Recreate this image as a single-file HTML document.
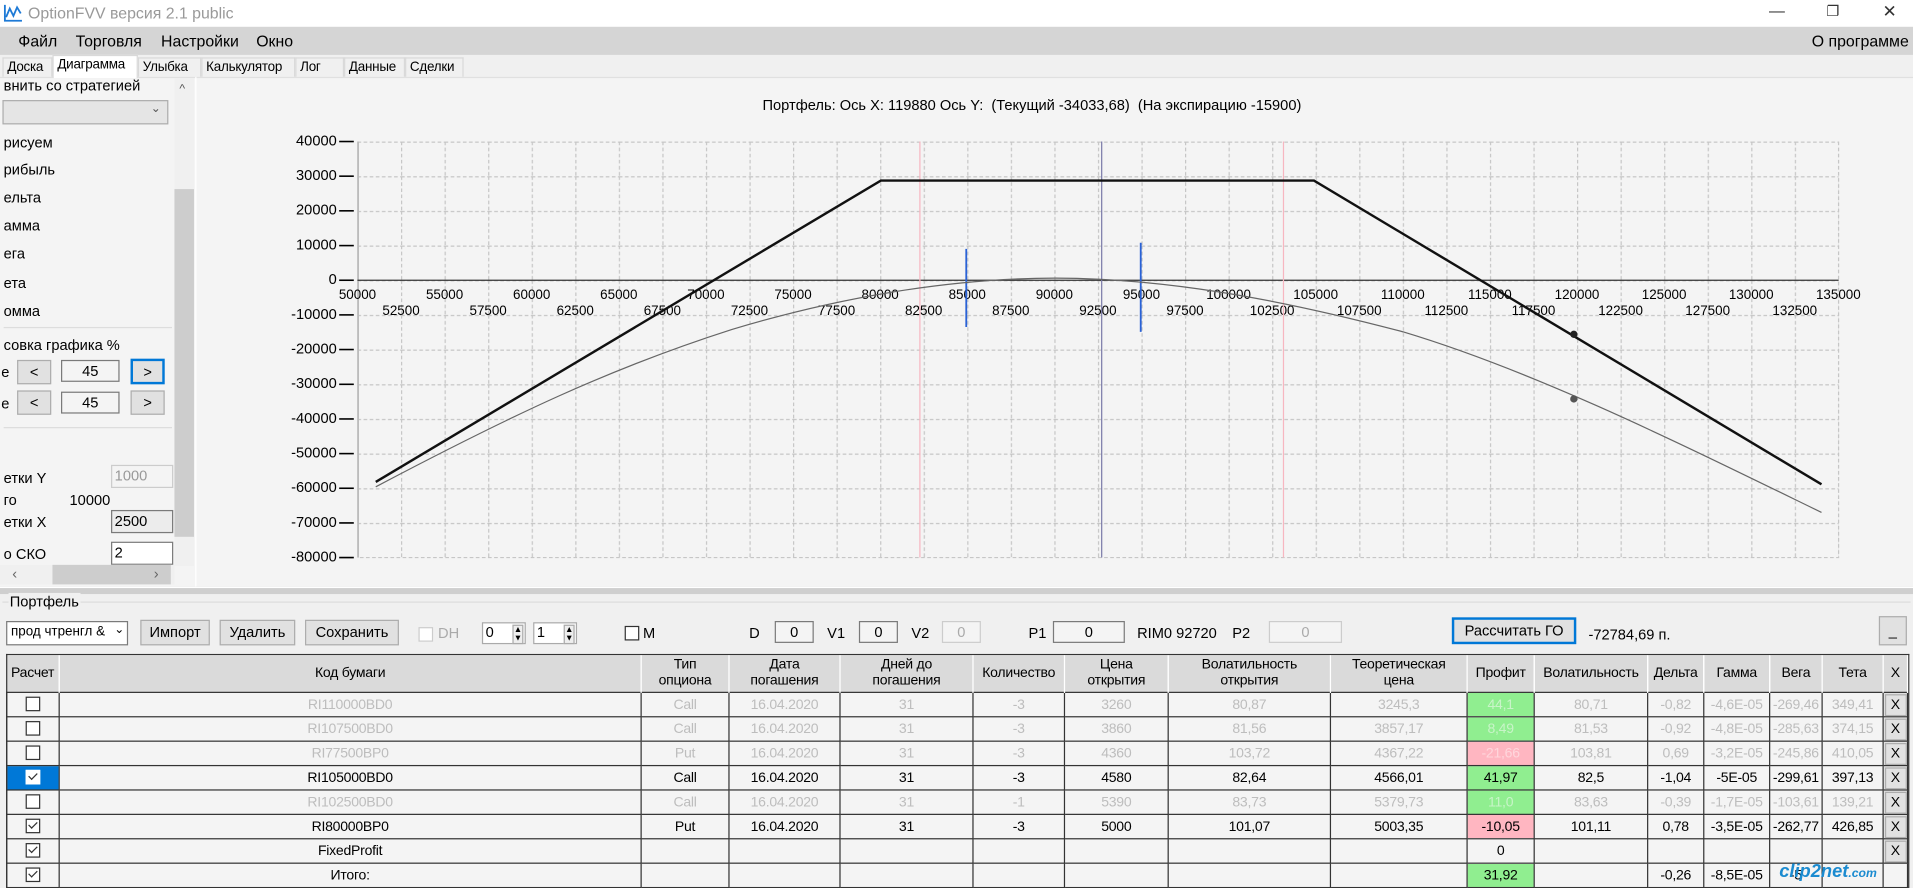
<!DOCTYPE html>
<html><head><meta charset="utf-8">
<style>
html,body{margin:0;padding:0;width:1913px;height:888px;overflow:hidden;background:#f0f0f0;}
#w{position:absolute;left:0;top:0;width:1568px;height:728px;transform:scale(1.22003);transform-origin:0 0;font-family:"Liberation Sans",Arial,sans-serif;font-size:12px;color:#000;background:#f0f0f0;}
.a{position:absolute;white-space:nowrap;}
.btn{position:absolute;background:#e1e1e1;border:1px solid #adadad;box-sizing:border-box;text-align:center;font-size:12px;}
.box{position:absolute;background:#f4f4f4;border:1px solid #7a7a7a;box-sizing:border-box;text-align:center;font-size:12px;}
.tab{position:absolute;top:47px;height:16px;border:1px solid #d9d9d9;border-bottom:none;box-sizing:border-box;padding:1px 3px 0;font-size:11px;background:#f0f0f0;letter-spacing:-0.2px;}
table{border-collapse:collapse;table-layout:fixed;}
td,th{padding:0;text-align:center;overflow:hidden;white-space:nowrap;font-size:11.5px;letter-spacing:-0.2px;}
th{background:#dadada;font-weight:normal;height:30px;border-right:1px solid #fff;line-height:13px;}
td{height:19px;border:1px solid #333;background:#f4f4f4;}
tr.d td{color:#bdbdbd;}
td.g{background:#90ee90;color:#000;}
tr.d td.g{color:#c8f4c8;}
td.p{background:#ffb6c1;}
tr.d td.p{color:#ffd6dc;}
.cb{display:inline-block;width:10px;height:10px;border:1px solid #333;background:#fff;vertical-align:middle;position:relative;}
.cb.k::after{content:"";position:absolute;left:3px;top:0px;width:3px;height:6px;border:solid #333;border-width:0 1.5px 1.5px 0;transform:rotate(45deg);}
td.x{background:#e1e1e1;border:1px solid #333;}
td.x span{display:inline-block;width:16px;border:1px solid #adadad;background:#e1e1e1;line-height:16px;color:#000;}
</style></head><body><div id="w">
<div class="a" style="left:0;top:0;width:1568px;height:22px;background:#fff;"></div>
<svg class="a" style="left:3px;top:3px" width="16" height="15" viewBox="0 0 16 15"><path d="M1 1V14H15" stroke="#1e7ad6" stroke-width="1.5" fill="none"/><path d="M2 11L5 4L8 10L11 3L14 8" stroke="#1e7ad6" stroke-width="1.5" fill="none"/></svg>
<div class="a" style="left:23px;top:3px;font-size:13px;color:#999;">OptionFVV версия 2.1 public</div>
<div class="a" style="left:1450px;top:1px;font-size:13px;color:#333;">—</div>
<div class="a" style="left:1497px;top:2px;font-size:12px;color:#333;">❐</div>
<div class="a" style="left:1543px;top:1px;font-size:14px;color:#333;">✕</div>
<div class="a" style="left:0;top:22px;width:1568px;height:23px;background:#d5d5d5;"></div>
<div class="a" style="left:15px;top:26px;font-size:13px;">Файл</div>
<div class="a" style="left:62px;top:26px;font-size:13px;">Торговля</div>
<div class="a" style="left:132px;top:26px;font-size:13px;">Настройки</div>
<div class="a" style="left:210px;top:26px;font-size:13px;">Окно</div>
<div class="a" style="left:1485px;top:26px;font-size:13px;">О программе</div>
<div class="tab" style="left:2px;width:41px;">Доска</div>
<div class="tab" style="left:43px;top:45px;height:19px;width:70px;background:#fff;z-index:2;">Диаграмма</div>
<div class="tab" style="left:113px;width:52px;">Улыбка</div>
<div class="tab" style="left:165px;width:77px;">Калькулятор</div>
<div class="tab" style="left:242px;width:40px;">Лог</div>
<div class="tab" style="left:282px;width:50px;">Данные</div>
<div class="tab" style="left:332px;width:48px;">Сделки</div>
<div class="a" style="left:0;top:63px;width:1568px;height:418px;background:#f4f4f4;border-top:1px solid #e0e0e0;"></div>
<div class="a" style="left:3px;top:63px;">внить со стратегией</div>
<div class="a" style="left:2px;top:82px;width:136px;height:20px;background:#e5e5e5;border:1px solid #adadad;box-sizing:border-box;"><span style="position:absolute;right:5px;top:1px;font-size:10px;color:#555;">&#8964;</span></div>
<div class="a" style="left:3px;top:110px;">рисуем</div>
<div class="a" style="left:3px;top:132px;">рибыль</div>
<div class="a" style="left:3px;top:155px;">ельта</div>
<div class="a" style="left:3px;top:178px;">амма</div>
<div class="a" style="left:3px;top:201px;">ега</div>
<div class="a" style="left:3px;top:225px;">ета</div>
<div class="a" style="left:3px;top:248px;">омма</div>
<div class="a" style="left:3px;top:268px;width:138px;border-top:1px solid #ddd;"></div>
<div class="a" style="left:3px;top:276px;">совка графика %</div>
<div class="a" style="left:1px;top:298px;">е</div>
<div class="btn" style="left:14px;top:295px;width:28px;height:20px;line-height:18px;">&lt;</div>
<div class="box" style="left:50px;top:295px;width:48px;height:18px;line-height:16px;">45</div>
<div class="btn" style="left:107px;top:294px;width:28px;height:21px;line-height:18px;border:2px solid #0078d7;">&gt;</div>
<div class="a" style="left:1px;top:324px;">е</div>
<div class="btn" style="left:14px;top:320px;width:28px;height:20px;line-height:18px;">&lt;</div>
<div class="box" style="left:50px;top:321px;width:48px;height:18px;line-height:16px;">45</div>
<div class="btn" style="left:107px;top:320px;width:28px;height:20px;line-height:18px;">&gt;</div>
<div class="a" style="left:3px;top:350px;width:138px;border-top:1px solid #ddd;"></div>
<div class="a" style="left:3px;top:385px;">етки Y</div>
<div class="box" style="left:91px;top:381px;width:51px;height:19px;line-height:17px;text-align:left;padding-left:2px;color:#999;border-color:#ccc;">1000</div>
<div class="a" style="left:3px;top:403px;">го</div>
<div class="a" style="left:57px;top:403px;">10000</div>
<div class="a" style="left:3px;top:421px;">етки X</div>
<div class="box" style="left:91px;top:418px;width:51px;height:19px;line-height:17px;text-align:left;padding-left:2px;background:#ececec;">2500</div>
<div class="a" style="left:3px;top:447px;">о СКО</div>
<div class="box" style="left:91px;top:444px;width:51px;height:19px;line-height:17px;text-align:left;padding-left:2px;background:#fff;">2</div>
<div class="a" style="left:146px;top:446px;font-size:9px;color:#666;">v</div>
<div class="a" style="left:143px;top:64px;width:16px;height:400px;background:#f0f0f0;"></div>
<div class="a" style="left:147px;top:68px;font-size:10px;color:#555;">^</div>
<div class="a" style="left:143px;top:155px;width:16px;height:285px;background:#cdcdcd;"></div>
<div class="a" style="left:0;top:463px;width:143px;height:16px;background:#f0f0f0;"></div>
<div class="a" style="left:10px;top:463px;color:#666;">&lsaquo;</div>
<div class="a" style="left:43px;top:463px;width:97px;height:16px;background:#cdcdcd;"></div>
<div class="a" style="left:126px;top:463px;color:#666;">&rsaquo;</div>
<div class="a" style="left:160px;top:63px;width:1px;height:418px;background:#fff;"></div>
<div class="a" style="left:625px;top:79px;font-size:12px;">Портфель: Ось X: 119880 Ось Y:&nbsp; (Текущий -34033,68)&nbsp; (На экспирацию -15900)</div>
<svg class="a" style="left:160px;top:63px" width="1408" height="418" viewBox="160 63 1408 418" font-family="Liberation Sans, Arial, sans-serif" font-size="12">
<defs><pattern id="gp" x="293" y="116" width="35.7" height="28.417" patternUnits="userSpaceOnUse"><path d="M0.5 0V28.417M0 0.5H35.7" stroke="#c6c6c6" stroke-width="1" stroke-dasharray="3 2" fill="none"/></pattern></defs>
<rect x="293" y="116" width="1214" height="341" fill="url(#gp)"/>
<path d="M1507 116V457H293" stroke="#c6c6c6" stroke-dasharray="3 2" fill="none"/>
<line x1="293.5" y1="116" x2="293.5" y2="457" stroke="#bbb" stroke-width="1.5"/>
<line x1="293" y1="229.7" x2="1507" y2="229.7" stroke="#333" stroke-width="1"/>
<g stroke="#000" stroke-width="1.3">
<line x1="278" y1="116" x2="290" y2="116"/><line x1="278" y1="144.4" x2="290" y2="144.4"/><line x1="278" y1="172.8" x2="290" y2="172.8"/><line x1="278" y1="201.3" x2="290" y2="201.3"/><line x1="278" y1="229.7" x2="290" y2="229.7"/><line x1="278" y1="258.1" x2="290" y2="258.1"/><line x1="278" y1="286.5" x2="290" y2="286.5"/><line x1="278" y1="315" x2="290" y2="315"/><line x1="278" y1="343.4" x2="290" y2="343.4"/><line x1="278" y1="371.8" x2="290" y2="371.8"/><line x1="278" y1="400.2" x2="290" y2="400.2"/><line x1="278" y1="428.6" x2="290" y2="428.6"/><line x1="278" y1="457" x2="290" y2="457"/>
</g>
<g text-anchor="end" dominant-baseline="middle">
<text x="276" y="116">40000</text><text x="276" y="144.4">30000</text><text x="276" y="172.8">20000</text><text x="276" y="201.3">10000</text><text x="276" y="229.7">0</text><text x="276" y="258.1">-10000</text><text x="276" y="286.5">-20000</text><text x="276" y="315">-30000</text><text x="276" y="343.4">-40000</text><text x="276" y="371.8">-50000</text><text x="276" y="400.2">-60000</text><text x="276" y="428.6">-70000</text><text x="276" y="457">-80000</text>
</g>
<g text-anchor="middle" font-size="11">
<text x="293" y="245">50000</text><text x="364.4" y="245">55000</text><text x="435.8" y="245">60000</text><text x="507.2" y="245">65000</text><text x="578.6" y="245">70000</text><text x="650" y="245">75000</text><text x="721.4" y="245">80000</text><text x="792.8" y="245">85000</text><text x="864.2" y="245">90000</text><text x="935.6" y="245">95000</text><text x="1007" y="245">100000</text><text x="1078.4" y="245">105000</text><text x="1149.8" y="245">110000</text><text x="1221.2" y="245">115000</text><text x="1292.6" y="245">120000</text><text x="1364" y="245">125000</text><text x="1435.4" y="245">130000</text><text x="1506.8" y="245">135000</text>
<text x="328.7" y="258">52500</text><text x="400.1" y="258">57500</text><text x="471.5" y="258">62500</text><text x="542.9" y="258">67500</text><text x="614.3" y="258">72500</text><text x="685.7" y="258">77500</text><text x="757.1" y="258">82500</text><text x="828.5" y="258">87500</text><text x="899.9" y="258">92500</text><text x="971.3" y="258">97500</text><text x="1042.7" y="258">102500</text><text x="1114.1" y="258">107500</text><text x="1185.5" y="258">112500</text><text x="1256.9" y="258">117500</text><text x="1328.3" y="258">122500</text><text x="1399.7" y="258">127500</text><text x="1471.1" y="258">132500</text>
</g>
<line x1="754" y1="116" x2="754" y2="457" stroke="#f7b6c0" stroke-width="1"/>
<line x1="1052" y1="116" x2="1052" y2="457" stroke="#f7b6c0" stroke-width="1"/>
<line x1="903" y1="116" x2="903" y2="457" stroke="#7a7aa8" stroke-width="1"/>
<line x1="792" y1="204" x2="792" y2="268" stroke="#2a62d6" stroke-width="1.5"/>
<line x1="935" y1="199" x2="935" y2="272" stroke="#2a62d6" stroke-width="1.5"/>
<path d="M308 399C420 340 500 302 600 270C700 240 790 228 865 228C950 228 1040 243 1150 272C1260 305 1380 365 1493 420" stroke="#666" stroke-width="1" fill="none"/>
<polyline points="308,395 722,148 1077,148 1493,397" stroke="#111" stroke-width="2" fill="none"/>
<circle cx="1290" cy="274" r="3" fill="#222"/>
<circle cx="1290" cy="327" r="3" fill="#555"/>
</svg>
<div class="a" style="left:0;top:481px;width:1568px;height:5px;background:#cfcfcf;border-top:1px solid #fff;"></div>
<div class="a" style="left:0;top:487px;width:1568px;height:241px;background:#f0f0f0;"></div>
<div class="a" style="left:2px;top:493px;width:1564px;border-top:1px solid #dcdcdc;"></div>
<div class="a" style="left:7px;top:486px;background:#f0f0f0;padding:0 1px;">Портфель</div>
<div class="a" style="left:5px;top:509px;width:100px;height:20px;background:#fff;border:1px solid #7a7a7a;box-sizing:border-box;padding:2px 3px;font-size:11px;overflow:hidden;">прод чтренгл &amp;<span style="position:absolute;right:2px;top:1px;background:#fff;font-size:10px;">&#8964;</span></div>
<div class="btn" style="left:115px;top:508px;width:57px;height:21px;line-height:19px;">Импорт</div>
<div class="btn" style="left:180px;top:508px;width:62px;height:21px;line-height:19px;">Удалить</div>
<div class="btn" style="left:250px;top:508px;width:77px;height:21px;line-height:19px;">Сохранить</div>
<div class="a" style="left:343px;top:514px;width:10px;height:10px;border:1px solid #ccc;background:#fff;"></div>
<div class="a" style="left:359px;top:512px;color:#aaa;">DH</div>
<div class="a" style="left:395px;top:510px;width:36px;height:18px;border:1px solid #aaa;background:#fff;box-sizing:border-box;padding-left:2px;">0<span style="position:absolute;right:1px;top:1px;font-size:7px;line-height:7px;border:1px solid #aaa;background:#eee;">▲<br>▼</span></div>
<div class="a" style="left:437px;top:510px;width:36px;height:18px;border:1px solid #aaa;background:#fff;box-sizing:border-box;padding-left:2px;">1<span style="position:absolute;right:1px;top:1px;font-size:7px;line-height:7px;border:1px solid #aaa;background:#eee;">▲<br>▼</span></div>
<div class="a" style="left:512px;top:513px;width:10px;height:10px;border:1px solid #333;background:#fff;"></div>
<div class="a" style="left:527px;top:512px;">M</div>
<div class="a" style="left:614px;top:512px;">D</div>
<div class="box" style="left:635px;top:509px;width:32px;height:18px;line-height:16px;">0</div>
<div class="a" style="left:678px;top:512px;">V1</div>
<div class="box" style="left:704px;top:509px;width:32px;height:18px;line-height:16px;">0</div>
<div class="a" style="left:747px;top:512px;">V2</div>
<div class="box" style="left:772px;top:509px;width:32px;height:18px;line-height:16px;color:#aaa;border-color:#ccc;">0</div>
<div class="a" style="left:843px;top:512px;">P1</div>
<div class="box" style="left:863px;top:509px;width:59px;height:18px;line-height:16px;">0</div>
<div class="a" style="left:932px;top:512px;">RIM0 92720</div>
<div class="a" style="left:1010px;top:512px;">P2</div>
<div class="box" style="left:1040px;top:509px;width:60px;height:18px;line-height:16px;color:#aaa;border-color:#ccc;">0</div>
<div class="btn" style="left:1190px;top:506px;width:102px;height:22px;line-height:18px;border:2px solid #0078d7;">Рассчитать ГО</div>
<div class="a" style="left:1302px;top:513px;">-72784,69 п.</div>
<div class="btn" style="left:1540px;top:505px;width:23px;height:24px;line-height:22px;">_</div>
<div class="a" style="left:5px;top:536px;width:1560px;height:192px;background:#f4f4f4;border:1px solid #333;border-bottom:none;box-sizing:border-box;"></div>
<table class="a" style="left:5px;top:537px;width:1558px;">
<colgroup><col style="width:43px"><col style="width:477px"><col style="width:72px"><col style="width:91px"><col style="width:109px"><col style="width:75px"><col style="width:85px"><col style="width:133px"><col style="width:112px"><col style="width:55px"><col style="width:93px"><col style="width:46px"><col style="width:54px"><col style="width:43px"><col style="width:50px"><col style="width:20px"></colgroup>
<tr><th>Расчет</th><th>Код бумаги</th><th>Тип<br>опциона</th><th>Дата<br>погашения</th><th>Дней до<br>погашения</th><th>Количество</th><th>Цена<br>открытия</th><th>Волатильность<br>открытия</th><th>Теоретическая<br>цена</th><th>Профит</th><th>Волатильность</th><th>Дельта</th><th>Гамма</th><th>Вега</th><th>Тета</th><th>X</th></tr>
<tr class="d"><td><span class="cb"></span></td><td>RI110000BD0</td><td>Call</td><td>16.04.2020</td><td>31</td><td>-3</td><td>3260</td><td>80,87</td><td>3245,3</td><td class="g">44,1</td><td>80,71</td><td>-0,82</td><td>-4,6E-05</td><td>-269,46</td><td>349,41</td><td class="x"><span>X</span></td></tr>
<tr class="d"><td><span class="cb"></span></td><td>RI107500BD0</td><td>Call</td><td>16.04.2020</td><td>31</td><td>-3</td><td>3860</td><td>81,56</td><td>3857,17</td><td class="g">8,49</td><td>81,53</td><td>-0,92</td><td>-4,8E-05</td><td>-285,63</td><td>374,15</td><td class="x"><span>X</span></td></tr>
<tr class="d"><td><span class="cb"></span></td><td>RI77500BP0</td><td>Put</td><td>16.04.2020</td><td>31</td><td>-3</td><td>4360</td><td>103,72</td><td>4367,22</td><td class="p">-21,66</td><td>103,81</td><td>0,69</td><td>-3,2E-05</td><td>-245,86</td><td>410,05</td><td class="x"><span>X</span></td></tr>
<tr><td style="background:#0078d7"><span class="cb k" style="border-color:#fff"></span></td><td>RI105000BD0</td><td>Call</td><td>16.04.2020</td><td>31</td><td>-3</td><td>4580</td><td>82,64</td><td>4566,01</td><td class="g">41,97</td><td>82,5</td><td>-1,04</td><td>-5E-05</td><td>-299,61</td><td>397,13</td><td class="x"><span>X</span></td></tr>
<tr class="d"><td><span class="cb"></span></td><td>RI102500BD0</td><td>Call</td><td>16.04.2020</td><td>31</td><td>-1</td><td>5390</td><td>83,73</td><td>5379,73</td><td class="g">11,0</td><td>83,63</td><td>-0,39</td><td>-1,7E-05</td><td>-103,61</td><td>139,21</td><td class="x"><span>X</span></td></tr>
<tr><td><span class="cb k"></span></td><td>RI80000BP0</td><td>Put</td><td>16.04.2020</td><td>31</td><td>-3</td><td>5000</td><td>101,07</td><td>5003,35</td><td class="p">-10,05</td><td>101,11</td><td>0,78</td><td>-3,5E-05</td><td>-262,77</td><td>426,85</td><td class="x"><span>X</span></td></tr>
<tr><td><span class="cb k"></span></td><td>FixedProfit</td><td></td><td></td><td></td><td></td><td></td><td></td><td></td><td>0</td><td></td><td></td><td></td><td></td><td></td><td class="x"><span>X</span></td></tr>
<tr><td><span class="cb k"></span></td><td>Итого:</td><td></td><td></td><td></td><td></td><td></td><td></td><td></td><td class="g">31,92</td><td></td><td>-0,26</td><td>-8,5E-05</td><td>-5</td><td></td><td></td></tr>
</table>
<div class="a" style="left:1450px;top:706px;width:113px;height:22px;font-size:15px;font-weight:bold;color:#1b8bd0;font-style:italic;">&nbsp;&nbsp;clip2net<span style="font-size:10px;">.com</span></div>
</div></body></html>
